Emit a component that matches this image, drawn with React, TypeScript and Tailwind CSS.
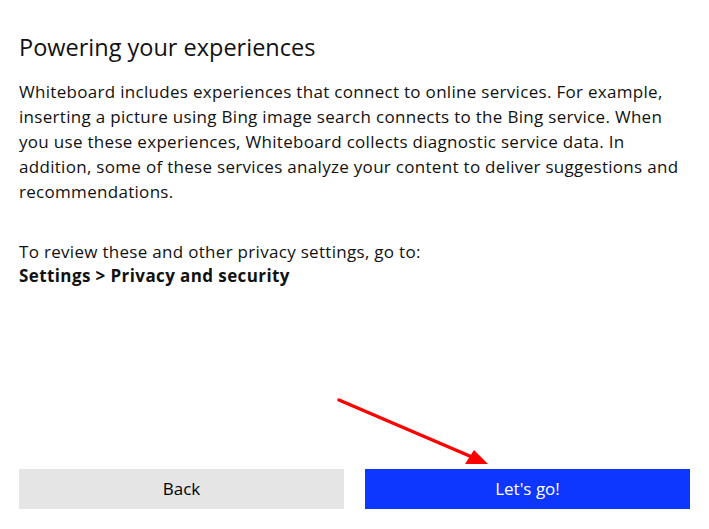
const App = () => {
  return (
    <div
      className="relative flex h-screen w-full flex-col bg-white px-[19px] pb-[20px] text-[#111]"
      style={{ fontFamily: '"Open Sans", "Noto Sans", sans-serif' }}
    >
      <h1 className="mt-[32px] text-[23.5px] leading-[30px] font-normal">Powering your experiences</h1>
      <p className="mt-[17px] whitespace-nowrap text-[17px] leading-[25px] tracking-[0.3px]">
        Whiteboard includes experiences that connect to online services. For example,
        <br />
        inserting a picture using Bing image search connects to the Bing service. When
        <br />
        you use these experiences, Whiteboard collects diagnostic service data. In
        <br />
        addition, some of these services analyze your content to deliver suggestions and
        <br />
        recommendations.
      </p>
      <p className="mt-[36px] text-[17px] leading-[24px] tracking-[0.3px]">
        To review these and other privacy settings, go to:
        <br />
        <span className="font-bold tracking-[0.4px]">Settings &gt; Privacy and security</span>
      </p>

      <div className="mt-auto flex gap-[21px]">
        <button className="h-[40px] flex-1 bg-[#e5e5e5] text-[17px] text-black">Back</button>
        <button className="h-[40px] flex-1 bg-[#0d36ff] text-[17px] text-white">Let's go!</button>
      </div>

      <svg className="pointer-events-none absolute left-0 top-0" width="709" height="529">
        <line x1="339" y1="400" x2="472" y2="457" stroke="#ff0000" strokeWidth="3.5" strokeLinecap="round" />
        <polygon points="488,464 465,464 474,450" fill="#ff0000" />
      </svg>
    </div>
  );
};

export default App;
